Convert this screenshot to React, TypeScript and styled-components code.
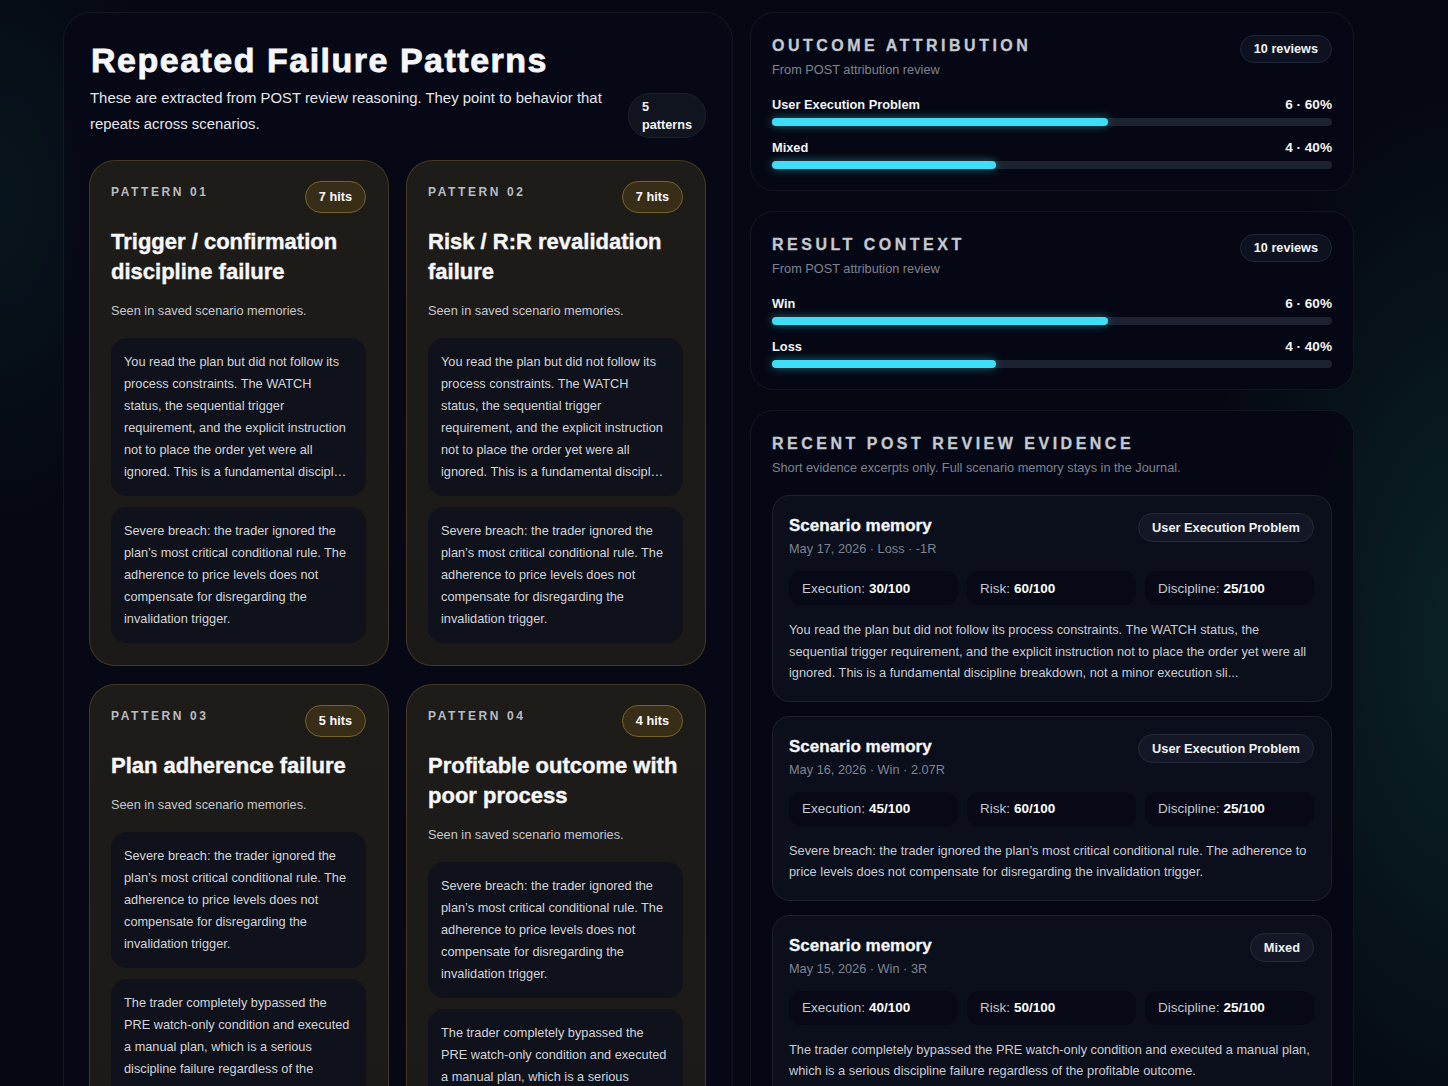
import React from 'react';
import styled, { createGlobalStyle } from 'styled-components';

const GlobalStyle = createGlobalStyle`
  * { box-sizing: border-box; }
  html, body {
    margin: 0;
    padding: 0;
    background: #050813;
  }
  body {
    font-family: "Liberation Sans", Arial, sans-serif;
    color: #f2f4f7;
    -webkit-font-smoothing: antialiased;
  }
`;

const Page = styled.div`
  height: 1086px;
  overflow: hidden;
  padding: 12px 0 0 63px;
  display: grid;
  grid-template-columns: 670px 604px;
  gap: 17px;
  align-items: start;
  background:
    radial-gradient(ellipse 380px 760px at 1470px 640px, rgba(18, 72, 64, 0.42), transparent 72%),
    radial-gradient(ellipse 240px 460px at 0px 200px, rgba(16, 48, 52, 0.32), transparent 70%),
    #050813;
`;

/* ---------- left: patterns ---------- */

const PatternsPanel = styled.section`
  border-radius: 28px;
  border: 1px solid rgba(255, 255, 255, 0.06);
  background: rgba(6, 9, 22, 0.92);
  padding: 27px 26px 40px 25px;
`;

const Title = styled.h1`
  margin: 0;
  font-size: 34px;
  line-height: 40px;
  font-weight: 700;
  letter-spacing: 1.5px;
  color: #f6f7f9;
  -webkit-text-stroke: 0.8px #f6f7f9;
  padding-left: 2px;
`;

const IntroRow = styled.div`
  display: flex;
  align-items: flex-start;
  gap: 18px;
  margin-top: 5px;
`;

const Intro = styled.p`
  margin: 0;
  flex: 1;
  font-size: 14.9px;
  line-height: 26px;
  color: #e3e6eb;
  padding-left: 1px;
`;

const CountPill = styled.div`
  flex-shrink: 0;
  width: min-content;
  margin-top: 8px;
  padding: 4px 13px 3px;
  border-radius: 22px;
  background: #10141f;
  border: 1px solid #1c2130;
  font-size: 12.7px;
  font-weight: 700;
  line-height: 18px;
  color: #f4f5f7;
`;

const PatternGrid = styled.div`
  margin-top: 22px;
  display: grid;
  grid-template-columns: 1fr 1fr;
  column-gap: 17px;
  row-gap: 18px;
`;

const PatternCard = styled.article`
  border-radius: 26px;
  border: 1px solid rgba(150, 118, 50, 0.32);
  background: linear-gradient(180deg, #1e1c19 0%, #1b1a18 100%);
  padding: 20px 22px 22px 21px;
`;

const CardHead = styled.div`
  display: flex;
  justify-content: space-between;
  align-items: flex-start;
`;

const PatternLabel = styled.span`
  margin-top: 4px;
  font-size: 12px;
  font-weight: 700;
  letter-spacing: 2.6px;
  color: #b9bcc4;
`;

const HitsBadge = styled.span`
  height: 32px;
  display: inline-flex;
  align-items: center;
  padding: 0 13px;
  border-radius: 16px;
  background: #382e18;
  border: 1px solid #77612a;
  font-size: 12.7px;
  font-weight: 700;
  color: #fbfbfb;
`;

const PatternTitle = styled.h2`
  margin: 14px 0 0;
  font-size: 22px;
  line-height: 30px;
  font-weight: 700;
  color: #f7f7f8;
  -webkit-text-stroke: 0.4px #f7f7f8;
`;

const Seen = styled.p`
  margin: 14px 0 0;
  font-size: 12.75px;
  line-height: 20px;
  color: #c6c8cd;
`;

const QuoteStack = styled.div`
  margin-top: 17px;
  display: flex;
  flex-direction: column;
  gap: 11px;
`;

const Quote = styled.p`
  margin: 0;
  padding: 13px 15px 13px 13px;
  border-radius: 16px;
  background: #10121b;
  font-size: 12.75px;
  line-height: 22px;
  color: #d3d5da;
`;

/* ---------- right: stats + evidence ---------- */

const RightColumn = styled.div`
  display: flex;
  flex-direction: column;
  gap: 20px;
`;

const Panel = styled.section`
  border-radius: 24px;
  border: 1px solid rgba(255, 255, 255, 0.06);
  background: rgba(5, 8, 20, 0.95);
  padding: 23px 21px 21px;
`;

const PanelHead = styled.div`
  display: flex;
  justify-content: space-between;
  align-items: flex-start;
`;

const PanelTitle = styled.h3`
  margin: 0;
  font-size: 16px;
  line-height: 20px;
  font-weight: 700;
  letter-spacing: 3.5px;
  color: #c4c8d0;
  -webkit-text-stroke: 0.3px #c4c8d0;
`;

const PanelSub = styled.p`
  margin: 5px 0 0;
  font-size: 12.75px;
  line-height: 18px;
  color: #7d8391;
`;

const ReviewsBadge = styled.span`
  margin-top: -1px;
  height: 28px;
  display: inline-flex;
  align-items: center;
  padding: 0 13px;
  border-radius: 14px;
  background: #0e1220;
  border: 1px solid #20263a;
  font-size: 12.7px;
  font-weight: 700;
  color: #f3f4f6;
`;

const Bars = styled.div`
  margin-top: 17px;
  display: flex;
  flex-direction: column;
  gap: 13px;
`;

const BarRow = styled.div`
  display: flex;
  flex-direction: column;
  gap: 4px;
`;

const BarLabels = styled.div`
  display: flex;
  justify-content: space-between;
  font-size: 12.8px;
  line-height: 18px;
  font-weight: 700;
  color: #f3f4f6;
`;

const BarValue = styled.span`
  font-size: 13.6px;
`;

const Track = styled.div`
  height: 8px;
  border-radius: 4px;
  background: #1d2231;
`;

const Fill = styled.div`
  height: 100%;
  border-radius: 4px;
  background: #40def6;
  box-shadow: 0 0 8px rgba(64, 222, 246, 0.45);
`;

const EvidenceList = styled.div`
  margin-top: 18px;
  display: flex;
  flex-direction: column;
  gap: 14px;
`;

const EvidenceCard = styled.article`
  border-radius: 18px;
  border: 1px solid rgba(255, 255, 255, 0.07);
  background: #0b0f1c;
  padding: 19px 17px 17px 16px;
`;

const EvidenceHead = styled.div`
  display: flex;
  justify-content: space-between;
  align-items: flex-start;
`;

const EvidenceTitle = styled.h4`
  margin: 0;
  font-size: 17px;
  line-height: 22px;
  font-weight: 700;
  color: #f6f7f8;
  -webkit-text-stroke: 0.3px #f6f7f8;
`;

const Meta = styled.p`
  margin: 3px 0 0;
  font-size: 12.75px;
  line-height: 18px;
  color: #7e8492;
`;

const Chip = styled.span`
  margin-top: -2px;
  height: 29px;
  display: inline-flex;
  align-items: center;
  padding: 0 13px;
  border-radius: 15px;
  background: #141826;
  border: 1px solid #242a3a;
  font-size: 12.8px;
  font-weight: 700;
  color: #f1f2f4;
`;

const Metrics = styled.div`
  margin-top: 13px;
  display: grid;
  grid-template-columns: repeat(3, 1fr);
  gap: 9px;
`;

const Metric = styled.div`
  height: 34px;
  display: flex;
  align-items: center;
  padding: 0 13px;
  border-radius: 12px;
  background: #070a16;
  font-size: 13.5px;
  color: #c3c7cf;

  b {
    margin-left: 4px;
    color: #ffffff;
  }
`;

const EvidenceText = styled.p`
  margin: 14px 0 0;
  font-size: 12.8px;
  line-height: 21.5px;
  color: #c9ccd3;
`;

/* ---------- data ---------- */

const Q_WATCH =
  'You read the plan but did not follow its process constraints. The WATCH status, the sequential trigger requirement, and the explicit instruction not to place the order yet were all ignored. This is a fundamental discipl…';
const Q_BREACH =
  'Severe breach: the trader ignored the plan’s most critical conditional rule. The adherence to price levels does not compensate for disregarding the invalidation trigger.';
const Q_BYPASS =
  'The trader completely bypassed the PRE watch-only condition and executed a manual plan, which is a serious discipline failure regardless of the profitable outcome.';

const patterns = [
  { n: '01', hits: 7, title: 'Trigger / confirmation discipline failure', quotes: [Q_WATCH, Q_BREACH] },
  { n: '02', hits: 7, title: 'Risk / R:R revalidation failure', quotes: [Q_WATCH, Q_BREACH] },
  { n: '03', hits: 5, title: 'Plan adherence failure', quotes: [Q_BREACH, Q_BYPASS] },
  { n: '04', hits: 4, title: 'Profitable outcome with poor process', quotes: [Q_BREACH, Q_BYPASS] },
];

const stats = [
  {
    title: 'Outcome Attribution',
    rows: [
      { label: 'User Execution Problem', count: 6, pct: 60 },
      { label: 'Mixed', count: 4, pct: 40 },
    ],
  },
  {
    title: 'Result Context',
    rows: [
      { label: 'Win', count: 6, pct: 60 },
      { label: 'Loss', count: 4, pct: 40 },
    ],
  },
];

const evidence = [
  {
    meta: 'May 17, 2026 · Loss · -1R',
    tag: 'User Execution Problem',
    scores: [30, 60, 25],
    text: 'You read the plan but did not follow its process constraints. The WATCH status, the sequential trigger requirement, and the explicit instruction not to place the order yet were all ignored. This is a fundamental discipline breakdown, not a minor execution sli...',
  },
  {
    meta: 'May 16, 2026 · Win · 2.07R',
    tag: 'User Execution Problem',
    scores: [45, 60, 25],
    text: Q_BREACH,
  },
  {
    meta: 'May 15, 2026 · Win · 3R',
    tag: 'Mixed',
    scores: [40, 50, 25],
    text: Q_BYPASS,
  },
];

const scoreNames = ['Execution', 'Risk', 'Discipline'];

export default function App() {
  return (
    <>
      <GlobalStyle />
      <Page>
        <PatternsPanel>
          <Title>Repeated Failure Patterns</Title>
          <IntroRow>
            <Intro>
              These are extracted from POST review reasoning. They point to behavior that
              repeats across scenarios.
            </Intro>
            <CountPill>5 patterns</CountPill>
          </IntroRow>

          <PatternGrid>
            {patterns.map((p) => (
              <PatternCard key={p.n}>
                <CardHead>
                  <PatternLabel>PATTERN {p.n}</PatternLabel>
                  <HitsBadge>{p.hits} hits</HitsBadge>
                </CardHead>
                <PatternTitle>{p.title}</PatternTitle>
                <Seen>Seen in saved scenario memories.</Seen>
                <QuoteStack>
                  {p.quotes.map((q, i) => (
                    <Quote key={i}>{q}</Quote>
                  ))}
                </QuoteStack>
              </PatternCard>
            ))}
          </PatternGrid>
        </PatternsPanel>

        <RightColumn>
          {stats.map((s) => (
            <Panel key={s.title}>
              <PanelHead>
                <div>
                  <PanelTitle>{s.title.toUpperCase()}</PanelTitle>
                  <PanelSub>From POST attribution review</PanelSub>
                </div>
                <ReviewsBadge>10 reviews</ReviewsBadge>
              </PanelHead>
              <Bars>
                {s.rows.map((r) => (
                  <BarRow key={r.label}>
                    <BarLabels>
                      <span>{r.label}</span>
                      <BarValue>
                        {r.count} · {r.pct}%
                      </BarValue>
                    </BarLabels>
                    <Track>
                      <Fill style={{ width: `${r.pct}%` }} />
                    </Track>
                  </BarRow>
                ))}
              </Bars>
            </Panel>
          ))}

          <Panel>
            <PanelTitle>RECENT POST REVIEW EVIDENCE</PanelTitle>
            <PanelSub>Short evidence excerpts only. Full scenario memory stays in the Journal.</PanelSub>
            <EvidenceList>
              {evidence.map((e) => (
                <EvidenceCard key={e.meta}>
                  <EvidenceHead>
                    <div>
                      <EvidenceTitle>Scenario memory</EvidenceTitle>
                      <Meta>{e.meta}</Meta>
                    </div>
                    <Chip>{e.tag}</Chip>
                  </EvidenceHead>
                  <Metrics>
                    {e.scores.map((v, i) => (
                      <Metric key={scoreNames[i]}>
                        {scoreNames[i]}:<b>{v}/100</b>
                      </Metric>
                    ))}
                  </Metrics>
                  <EvidenceText>{e.text}</EvidenceText>
                </EvidenceCard>
              ))}
            </EvidenceList>
          </Panel>
        </RightColumn>
      </Page>
    </>
  );
}
